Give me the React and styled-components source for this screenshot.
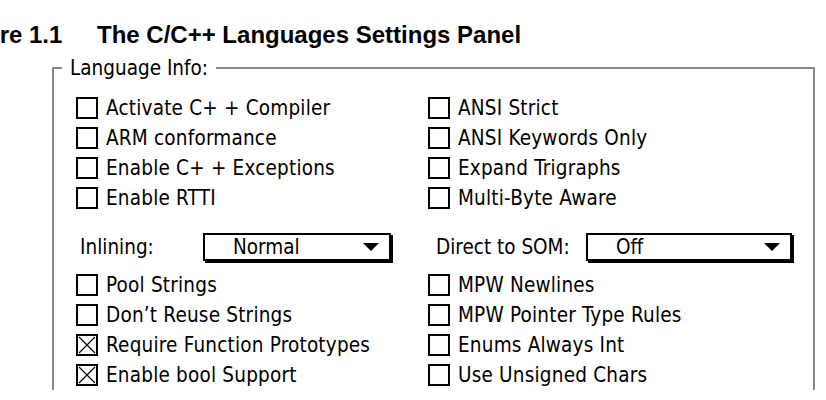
import React from 'react'
import styled, { createGlobalStyle } from 'styled-components'

const GlobalStyle = createGlobalStyle`
  body {
    margin: 0;
    background: #fff;
  }
`

const Page = styled.div`
  width: 826px;
  height: 400px;
  overflow: hidden;
  background: #fff;
`

const Caption = styled.h1`
  margin: 0;
  padding-top: 22px;
  height: 57px;
  box-sizing: border-box;
  font-family: "Liberation Sans", Arial, sans-serif;
  font-weight: bold;
  font-size: 24px;
  line-height: 26px;
  color: #000;
  white-space: nowrap;
  span {
    display: inline-block;
    margin-left: -51px;
    width: 148px;
  }
`

const GroupBox = styled.fieldset`
  margin: 0 0 0 52px;
  width: 763px;
  box-sizing: border-box;
  border: 2px solid #888;
  border-bottom: none;
  padding: 14px 0 0 22px;
  font-family: "DejaVu Sans Condensed", "DejaVu Sans", sans-serif;
  font-size: 20.5px;
  color: #000;
`

const Legend = styled.legend`
  margin-left: -14px;
  padding: 0 8px;
  line-height: 22px;
`

const Section = styled.div`
  display: grid;
  grid-template-columns: 352px 1fr;
`

const Column = styled.div`
  display: flex;
  flex-direction: column;
`

const Row = styled.div`
  display: flex;
  align-items: center;
  height: 30px;
`

const Box = styled.span`
  width: 22px;
  height: 22px;
  box-sizing: border-box;
  border: 2px solid #000;
  flex: none;
  display: flex;
  svg { display: block; }
`

const Label = styled.span`
  margin-left: 8px;
  white-space: nowrap;
  letter-spacing: 0.2px;
`

const PopupRow = styled.div`
  display: flex;
  align-items: center;
  height: 30px;
  margin: 19px 0 8px;
`

const PopupLabel = styled.span`
  width: ${p => p.$width}px;
  padding-left: ${p => p.$indent}px;
  box-sizing: border-box;
  flex: none;
  white-space: nowrap;
`

const Popup = styled.div`
  width: ${p => p.$width}px;
  height: 28px;
  box-sizing: border-box;
  border: 2px solid #000;
  box-shadow: 2px 2px 0 #000;
  display: flex;
  align-items: center;
  justify-content: space-between;
  padding: 0 10px 0 28px;
`

const Arrow = styled.span`
  width: 0;
  height: 0;
  border-left: 8px solid transparent;
  border-right: 8px solid transparent;
  border-top: 8px solid #000;
`

function Check({ label, checked }) {
  return (
    <Row>
      <Box>
        {checked && (
          <svg width="18" height="18" viewBox="0 0 18 18">
            <path d="M1 1L17 17M17 1L1 17" stroke="#000" strokeWidth="1.2" />
          </svg>
        )}
      </Box>
      <Label>{label}</Label>
    </Row>
  )
}

function PopupMenu({ label, value, labelWidth, indent, width }) {
  return (
    <PopupRow>
      <PopupLabel $width={labelWidth} $indent={indent}>{label}</PopupLabel>
      <Popup $width={width}>
        <span>{value}</span>
        <Arrow />
      </Popup>
    </PopupRow>
  )
}

export default function App() {
  return (
    <Page>
      <GlobalStyle />
      <Caption>
        <span>Figure 1.1</span>The C/C++ Languages Settings Panel
      </Caption>
      <GroupBox>
        <Legend>Language Info:</Legend>
        <Section>
          <Column>
            <Check label="Activate C+ + Compiler" />
            <Check label="ARM conformance" />
            <Check label="Enable C+ + Exceptions" />
            <Check label="Enable RTTI" />
            <PopupMenu label="Inlining:" value="Normal" labelWidth={127} indent={4} width={188} />
            <Check label="Pool Strings" />
            <Check label="Don’t Reuse Strings" />
            <Check label="Require Function Prototypes" checked />
            <Check label="Enable bool Support" checked />
          </Column>
          <Column>
            <Check label="ANSI Strict" />
            <Check label="ANSI Keywords Only" />
            <Check label="Expand Trigraphs" />
            <Check label="Multi-Byte Aware" />
            <PopupMenu label="Direct to SOM:" value="Off" labelWidth={158} indent={8} width={206} />
            <Check label="MPW Newlines" />
            <Check label="MPW Pointer Type Rules" />
            <Check label="Enums Always Int" />
            <Check label="Use Unsigned Chars" />
          </Column>
        </Section>
      </GroupBox>
    </Page>
  )
}
